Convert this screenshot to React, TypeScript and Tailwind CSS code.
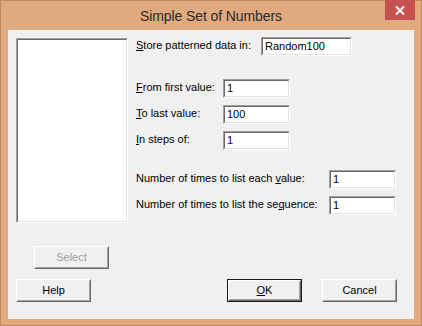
import React from "react";

// Classic Win8-era dialog: orange frame, grey client, 3D sunken fields and raised buttons.

const FONT = "font-['Liberation_Sans',Arial,sans-serif]";

function Sunken({ className = "", children }: { className?: string; children?: React.ReactNode }) {
  return (
    <div className={`border border-t-[#a0a0a0] border-l-[#a0a0a0] border-r-white border-b-white ${className}`}>
      <div className="h-full w-full border border-t-[#696969] border-l-[#696969] border-r-[#e3e3e3] border-b-[#e3e3e3] bg-white">
        {children}
      </div>
    </div>
  );
}

function Field({ value, width }: { value: string; width: string }) {
  return (
    <Sunken className={`h-[19px] ${width}`}>
      <div className="pl-[2px] text-[11px] leading-[15px] text-black">{value}</div>
    </Sunken>
  );
}

function Button({
  children,
  disabled,
  isDefault,
}: {
  children: React.ReactNode;
  disabled?: boolean;
  isDefault?: boolean;
}) {
  const inner = (
    <div className="h-full w-full border border-t-white border-l-white border-r-[#696969] border-b-[#696969] bg-[#f0f0f0]">
      <div className="flex h-full w-full items-center justify-center border border-t-[#f0f0f0] border-l-[#f0f0f0] border-r-[#a0a0a0] border-b-[#a0a0a0] text-[11px]">
        <span className={disabled ? "text-[#a0a0a0]" : "text-black"}>{children}</span>
      </div>
    </div>
  );
  return isDefault ? (
    <div className="h-[23px] w-[75px] border border-[#1a1a1a]">{inner}</div>
  ) : (
    <div className="h-[23px] w-[75px]">{inner}</div>
  );
}

function Acc({ c }: { c: string }) {
  return <span className="underline underline-offset-[1px]">{c}</span>;
}

export default function App() {
  return (
    <div className={`${FONT} h-[326px] w-[422px] border border-[#b98a66] bg-[#e0a97e] flex flex-col`}>
      {/* Title bar */}
      <div className="relative h-[29px] flex items-center justify-center">
        <span className="text-[14px] tracking-[-0.1px] text-[#2a2a2a] pt-[1px] font-['Liberation_Sans',Arial,sans-serif]">
          Simple Set of Numbers
        </span>
        <div className="absolute right-[6px] top-[-1px] flex h-[20px] w-[30px] items-center justify-center bg-[#c75050]">
          <svg width="10" height="9" viewBox="0 0 10 9">
            <path d="M1 0.5 L9 8.5 M9 0.5 L1 8.5" stroke="white" strokeWidth="2" />
          </svg>
        </div>
      </div>

      {/* Client area */}
      <div className="mx-[7px] mb-[6px] flex-1 bg-[#f0f0f0] px-[8px] pt-[7px] text-[11px] text-black">
        <div className="flex">
          <Sunken className="mt-[1px] h-[185px] w-[112px]" />
          <div className="ml-[8px] flex flex-col">
            <div className="flex h-[19px] items-center">
              <span className="w-[125px] -mt-[2px]">
                <Acc c="S" />tore patterned data in:
              </span>
              <Field value="Random100" width="w-[91px]" />
            </div>
            <div className="mt-[23px] flex h-[19px] items-center">
              <span className="w-[87px] -mt-[2px]">
                <Acc c="F" />rom first value:
              </span>
              <Field value="1" width="w-[67px]" />
            </div>
            <div className="mt-[7px] flex h-[19px] items-center">
              <span className="w-[87px] -mt-[2px]">
                <Acc c="T" />o last value:
              </span>
              <Field value="100" width="w-[67px]" />
            </div>
            <div className="mt-[7px] flex h-[19px] items-center">
              <span className="w-[87px] -mt-[2px]">
                <Acc c="I" />n steps of:
              </span>
              <Field value="1" width="w-[67px]" />
            </div>
            <div className="mt-[20px] flex h-[19px] items-center">
              <span className="w-[193px] -mt-[2px]">
                Number of times to list each <Acc c="v" />alue:
              </span>
              <Field value="1" width="w-[67px]" />
            </div>
            <div className="mt-[7px] flex h-[19px] items-center">
              <span className="w-[193px] -mt-[2px]">
                Number of times to list the se<Acc c="q" />uence:
              </span>
              <Field value="1" width="w-[67px]" />
            </div>
          </div>
        </div>

        <div className="ml-[18px] mt-[23px]">
          <Button disabled>Select</Button>
        </div>

        <div className="mt-[10px] flex">
          <Button>Help</Button>
          <div className="ml-[136px]">
            <Button isDefault>
              <Acc c="O" />K
            </Button>
          </div>
          <div className="ml-[20px]">
            <Button>Cancel</Button>
          </div>
        </div>
      </div>
    </div>
  );
}
